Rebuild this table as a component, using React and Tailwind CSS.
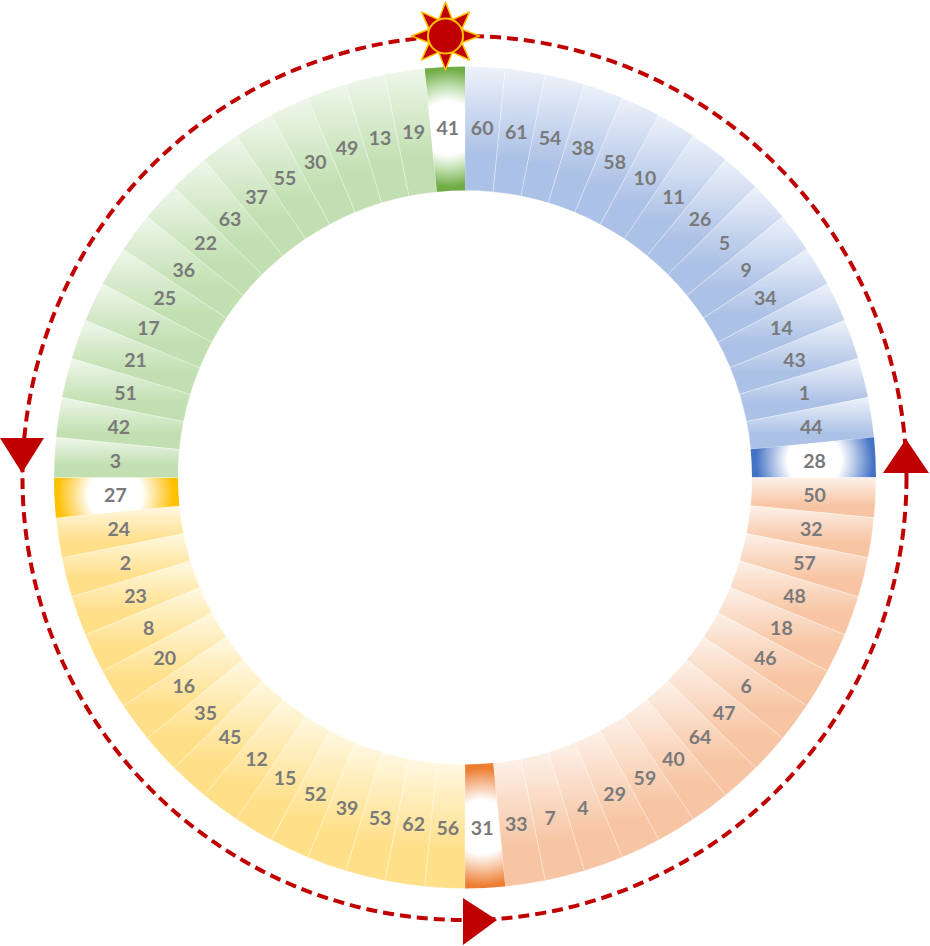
const CX = 465;
const CY = 477.5;
const R_OUT = 411;
const R_IN = 287;
const R_TXT = 350;
const STEP = 360 / 64;

const QUADS = [
  {
    id: "blue",
    nums: [60, 61, 54, 38, 58, 10, 11, 26, 5, 9, 34, 14, 43, 1, 44, 28],
    light: "#edf2fa",
    base: "#acc1e6",
    strong: "#4472c4",
  },
  {
    id: "orange",
    nums: [50, 32, 57, 48, 18, 46, 6, 47, 64, 40, 59, 29, 4, 7, 33, 31],
    light: "#fdf1e9",
    base: "#f7c5a3",
    strong: "#ed7d31",
  },
  {
    id: "yellow",
    nums: [56, 62, 53, 39, 52, 15, 12, 45, 35, 16, 20, 8, 23, 2, 24, 27],
    light: "#fff8e2",
    base: "#ffdf88",
    strong: "#ffc000",
  },
  {
    id: "green",
    nums: [3, 42, 51, 21, 17, 25, 36, 22, 63, 37, 55, 30, 49, 13, 19, 41],
    light: "#eff7eb",
    base: "#c1dfb0",
    strong: "#70ad47",
  },
];

function pt(r, deg) {
  const a = (deg * Math.PI) / 180;
  return [CX + r * Math.sin(a), CY - r * Math.cos(a)];
}

function wedge(a0, a1) {
  const [x0, y0] = pt(R_OUT, a0);
  const [x1, y1] = pt(R_OUT, a1);
  const [x2, y2] = pt(R_IN, a1);
  const [x3, y3] = pt(R_IN, a0);
  return `M${x0} ${y0} A${R_OUT} ${R_OUT} 0 0 1 ${x1} ${y1} L${x2} ${y2} A${R_IN} ${R_IN} 0 0 0 ${x3} ${y3} Z`;
}

function Sun({ x, y }) {
  const rays = [0, 45, 90, 135, 180, 225, 270, 315].map((deg) => {
    const a = (deg * Math.PI) / 180;
    const dx = Math.sin(a);
    const dy = -Math.cos(a);
    const tip = [x + dx * 34, y + dy * 34];
    const b1 = [x + dx * 17 - dy * 6.5, y + dy * 17 + dx * 6.5];
    const b2 = [x + dx * 17 + dy * 6.5, y + dy * 17 - dx * 6.5];
    return (
      <polygon
        key={deg}
        points={`${tip[0]},${tip[1]} ${b1[0]},${b1[1]} ${b2[0]},${b2[1]}`}
        fill="#c00000"
        stroke="#ffc000"
        strokeWidth="1.5"
        strokeLinejoin="round"
      />
    );
  });
  return (
    <g>
      {rays}
      <circle cx={x} cy={y} r="17.5" fill="#c00000" stroke="#ffc000" strokeWidth="2" />
    </g>
  );
}

export default function App() {
  return (
    <div className="w-[930px] h-[946px] bg-white overflow-hidden">
      <svg
        width="930"
        height="946"
        viewBox="0 0 930 946"
        className="block font-[Lato,'Liberation_Sans',sans-serif] font-bold text-[19.5px]"
      >
        <defs>
          {QUADS.map((q) => (
            <linearGradient key={q.id} id={`lin-${q.id}`} x1="0" y1="0" x2="0" y2="1">
              <stop offset="0" stopColor={q.light} />
              <stop offset="0.7" stopColor={q.base} />
              <stop offset="1" stopColor={q.base} />
            </linearGradient>
          ))}
          {QUADS.map((q, qi) => {
            const [gx, gy] = pt(R_TXT, (qi * 16 + 15.5) * STEP);
            return (
              <radialGradient
                key={q.id}
                id={`rad-${q.id}`}
                gradientUnits="userSpaceOnUse"
                cx={gx}
                cy={gy}
                r="64"
              >
                <stop offset="0" stopColor="#ffffff" />
                <stop offset="0.42" stopColor="#ffffff" />
                <stop offset="0.65" stopColor={q.base} />
                <stop offset="0.92" stopColor={q.strong} />
                <stop offset="1" stopColor={q.strong} />
              </radialGradient>
            );
          })}
        </defs>

        <circle
          cx="464.5"
          cy="478"
          r="442"
          fill="none"
          stroke="#c00000"
          strokeWidth="4"
          strokeDasharray="11 6"
        />

        {QUADS.map((q, qi) =>
          q.nums.map((n, i) => {
            const idx = qi * 16 + i;
            const a0 = idx * STEP;
            const a1 = a0 + STEP;
            const strong = i === 15;
            return (
              <path
                key={`${q.id}-${n}`}
                d={wedge(a0, a1)}
                fill={strong ? `url(#rad-${q.id})` : `url(#lin-${q.id})`}
                stroke="#ffffff"
                strokeOpacity={strong ? "0" : "0.35"}
                strokeWidth="0.8"
              />
            );
          })
        )}

        {QUADS.map((q, qi) =>
          q.nums.map((n, i) => {
            const idx = qi * 16 + i;
            const [x, y] = pt(R_TXT, (idx + 0.5) * STEP);
            return (
              <text
                key={`t-${n}`}
                x={x}
                y={y}
                textAnchor="middle"
                dominantBaseline="central"
                fill="#7a7a7a"
              >
                {n}
              </text>
            );
          })
        )}

        <polygon points="0,438 44,438 22,473" fill="#c00000" />
        <polygon points="883,473 929,473 906,439" fill="#c00000" />
        <polygon points="463,898 463,945 497,920" fill="#c00000" />

        <Sun x={445.5} y={36} />
      </svg>
    </div>
  );
}
